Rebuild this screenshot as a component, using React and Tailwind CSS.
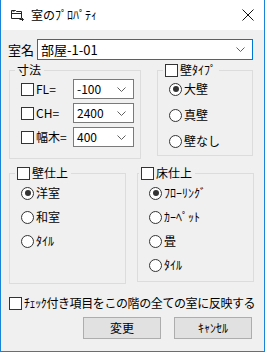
import React from 'react';

const Check = () => (
    <span className="block w-[13px] h-[13px] border border-[#333333] bg-white shrink-0" />
);

const Radio = ({ on }) => (
    <span className="flex items-center justify-center w-[13px] h-[13px] rounded-full border border-[#333333] bg-white shrink-0">
        {on && <span className="block w-[6px] h-[6px] rounded-full bg-[#333333]" />}
    </span>
);

const Chevron = () => (
    <svg width="9" height="5" viewBox="0 0 9 5" className="shrink-0">
        <path d="M0.5 0.5 L4.5 4.5 L8.5 0.5" stroke="#606060" fill="none" />
    </svg>
);

const Combo = ({ value, className }) => (
    <div className={`flex items-center bg-white border ${className}`}>
        <span className="flex-1 pl-[3px]">{value}</span>
        <span className="pr-[7px]"><Chevron /></span>
    </div>
);

const RadioRow = ({ on, label }) => (
    <div className="flex items-center h-[20px] gap-[2px]">
        <Radio on={on} />
        <span>{label}</span>
    </div>
);

const Group = ({ legend, className, children, offset = 'ml-[5px]' }) => (
    <fieldset className={`border border-[#dcdcdc] m-0 p-0 min-w-0 shrink-0 ${className}`}>
        <legend className={`${offset} px-[2px] p-0`}>
            <div className="flex items-center h-[16px] gap-[2px] pr-[1px]">{legend}</div>
        </legend>
        {children}
    </fieldset>
);

const DimRow = ({ label, value }) => (
    <div className="flex items-center h-[20px]">
        <Check />
        <span className="w-[39px] pl-[2px]">{label}</span>
        <Combo value={value} className="w-[61px] h-[20px] border-[#7a7a7a]" />
    </div>
);

export default function App() {
    return (
        <div className="w-[265px] h-[352px] flex flex-col text-[12px] leading-[16px] text-black" style={{ fontFamily: '"Noto Sans CJK JP", "Liberation Sans", sans-serif' }}>
            {/* title bar */}
            <div className="h-[30px] bg-white flex items-center pl-[10px] pr-[10px] border-x border-[#1883d7]">
                <svg width="13" height="12" viewBox="0 0 13 12" className="shrink-0">
                    <path d="M0.5 1.5 H4.5 L5.5 2.5 H10.5 V9.5 H0.5 Z" fill="#fff" stroke="#222" />
                    <path d="M0.5 4.5 H10.5" stroke="#222" />
                    <path d="M1.5 2.5 H3.5" stroke="#2a7de1" />
                    <path d="M8.5 10.5 H12.5 M11 9 L12.5 10.5 L11 12" stroke="#222" fill="none" />
                </svg>
                <span className="ml-[7px] flex-1">室のﾌﾟﾛﾊﾟﾃｨ</span>
                <svg width="12" height="12" viewBox="0 0 12 12">
                    <path d="M0.5 0.5 L11.5 11.5 M11.5 0.5 L0.5 11.5" stroke="#111" />
                </svg>
            </div>

            {/* body */}
            <div className="flex-1 bg-[#f0f0f0] border-x border-b border-[#1883d7] flex flex-col">
                <div className="flex items-center mt-[9px] pl-[7px] text-[13px]">
                    <span className="w-[29px]">室名</span>
                    <Combo value="部屋-1-01" className="w-[216px] h-[21px] border-[#0078d7]" />
                </div>

                <div className="flex items-start mt-[2px] pl-[8px] gap-[16px]">
                    <Group legend={<span>寸法</span>} className="w-[132px] h-[97px]">
                        <div className="flex flex-col gap-[4px] pt-[1px] pl-[11px]">
                            <DimRow label="FL=" value="-100" />
                            <DimRow label="CH=" value="2400" />
                            <DimRow label="幅木=" value="400" />
                        </div>
                    </Group>
                    <Group legend={<><Check /><span>壁ﾀｲﾌﾟ</span></>} className="w-[96px] h-[94px]">
                        <div className="flex flex-col gap-[6px] pt-[1px] pl-[11px]">
                            <RadioRow on label="大壁" />
                            <RadioRow label="真壁" />
                            <RadioRow label="壁なし" />
                        </div>
                    </Group>
                </div>

                <div className="flex items-start mt-[6px] pl-[8px] gap-[11px]">
                    <Group legend={<><Check /><span>壁仕上</span></>} className="w-[117px] h-[119px]">
                        <div className="flex flex-col gap-[4px] pt-[2px] pl-[11px]">
                            <RadioRow on label="洋室" />
                            <RadioRow label="和室" />
                            <RadioRow label="ﾀｲﾙ" />
                        </div>
                    </Group>
                    <Group legend={<><Check /><span>床仕上</span></>} className="w-[117px] h-[117px]" offset="ml-[1px]">
                        <div className="flex flex-col gap-[4px] pt-[2px] pl-[11px]">
                            <RadioRow on label="ﾌﾛｰﾘﾝｸﾞ" />
                            <RadioRow label="ｶｰﾍﾟｯﾄ" />
                            <RadioRow label="畳" />
                            <RadioRow label="ﾀｲﾙ" />
                        </div>
                    </Group>
                </div>

                <div className="flex items-center h-[16px] mt-[11px] pl-[8px] gap-[2px]">
                    <Check />
                    <span className="tracking-[-0.4px]">ﾁｪｯｸ付き項目をこの階の全ての室に反映する</span>
                </div>

                <div className="flex justify-end mt-[6px] pr-[12px] gap-[13px]">
                    <button className="w-[78px] h-[22px] bg-[#e1e1e1] border border-[#adadad]">変更</button>
                    <button className="w-[78px] h-[22px] bg-[#e1e1e1] border border-[#adadad]">ｷｬﾝｾﾙ</button>
                </div>
            </div>
        </div>
    );
}
